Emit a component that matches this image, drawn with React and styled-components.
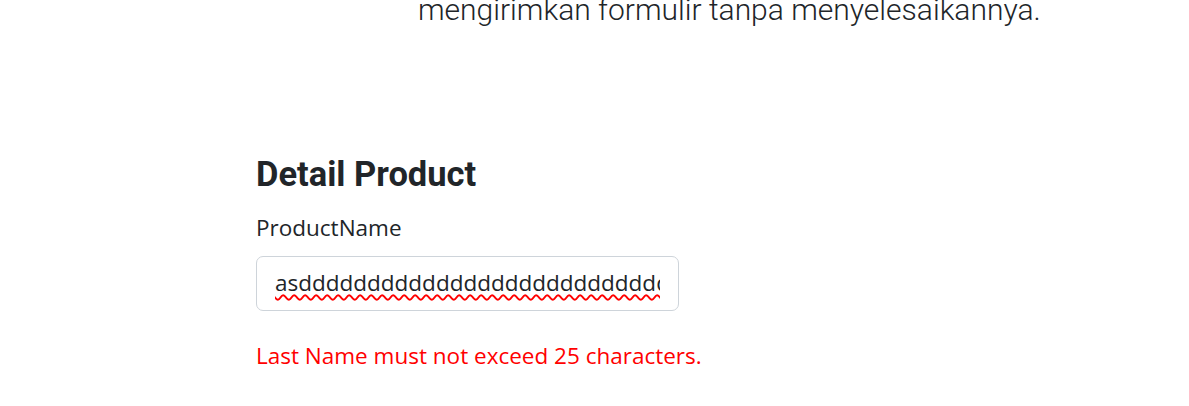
import React from 'react';
import styled, { createGlobalStyle } from 'styled-components';

const GlobalStyle = createGlobalStyle`
  * { box-sizing: border-box; }
  html, body {
    margin: 0;
    padding: 0;
    background: #ffffff;
    overflow: hidden;
  }
  body {
    font-family: "Open Sans", "Noto Sans", sans-serif;
    color: #212529;
  }
`;

const Page = styled.div`
  width: 100%;
  height: 406px;
  overflow: hidden;
`;

const Hero = styled.section`
  max-width: 937px;
  margin: -11px auto 0;
  display: grid;
  grid-template-columns: 292px 1fr;
`;

const HeroText = styled.p`
  grid-column: 2;
  margin: 0;
  font-family: Roboto, "Liberation Sans", sans-serif;
  font-weight: 300;
  font-size: 30px;
  line-height: 42px;
  color: #212529;
  white-space: nowrap;
`;

const FormSection = styled.section`
  width: 677px;
  margin: 0 auto;
  padding-top: 122px;
  display: flex;
  flex-direction: column;
`;

const Heading = styled.h2`
  margin: 0 0 16px;
  font-family: Roboto, "Liberation Sans", sans-serif;
  font-weight: 700;
  font-size: 34.5px;
  line-height: 42px;
  color: #212529;
`;

const Field = styled.div`
  display: flex;
  flex-direction: column;
  align-items: flex-start;
  margin-bottom: ${(p) => p.$gap || 0}px;
`;

const Label = styled.label`
  font-size: 22.5px;
  line-height: 33px;
  margin-bottom: 12px;
  color: #212529;
`;

const InputBox = styled.div`
  width: 423px;
  height: 55px;
  padding: 0 18px;
  display: flex;
  align-items: center;
  border: 1px solid #ced4da;
  border-radius: 7px;
  background: #fff;
`;

const Value = styled.span`
  display: block;
  width: 100%;
  overflow: hidden;
  white-space: nowrap;
  font-size: 22.5px;
  line-height: 33px;
  color: #212529;
  padding-bottom: 4px;
  margin-top: 2px;

  & > span {
    text-decoration: underline wavy #ff0000;
    text-decoration-thickness: 1.6px;
    text-underline-offset: 3px;
  }
`;

const ErrorText = styled.div`
  margin-top: 28px;
  font-size: 22.5px;
  line-height: 33px;
  color: #ff0000;
`;

export default function App() {
  const value = 'as' + 'd'.repeat(40);
  return (
    <Page>
      <GlobalStyle />
      <Hero>
        <HeroText>mengirimkan formulir tanpa menyelesaikannya.</HeroText>
      </Hero>
      <FormSection>
        <Heading>Detail Product</Heading>
        <Field $gap={29}>
          <Label>ProductName</Label>
          <InputBox role="textbox">
            <Value>
              <span>{value}</span>
            </Value>
          </InputBox>
          <ErrorText>Last Name must not exceed 25 characters.</ErrorText>
        </Field>
        <Field>
          <Label>Brand</Label>
        </Field>
      </FormSection>
    </Page>
  );
}
